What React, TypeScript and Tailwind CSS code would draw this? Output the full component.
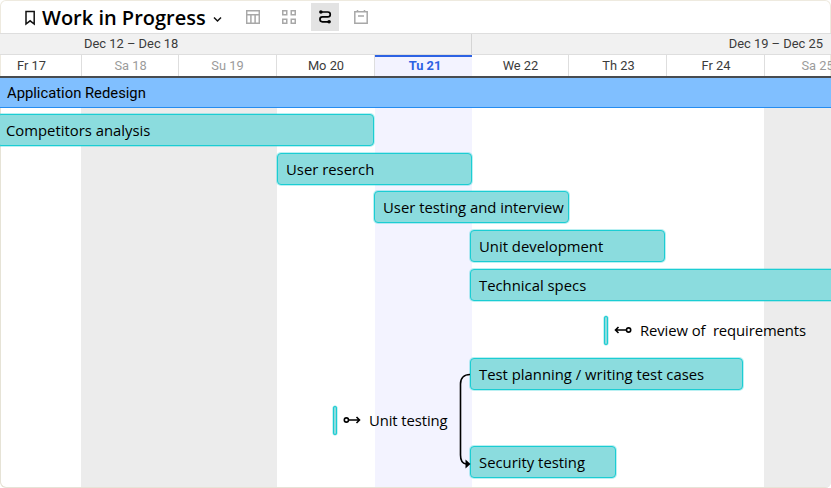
import React from "react";

type Day = { label: string; cell: string };

const days: Day[] = [
  { label: "Fr 17", cell: "w-[82px] pr-[18px] text-[#3b3b3b] border-r border-[#dedede]" },
  { label: "Sa 18", cell: "w-[97px] pl-px text-[#9b9b9b] border-r border-[#dedede]" },
  { label: "Su 19", cell: "w-[98px] text-[#9b9b9b] border-r border-[#dedede]" },
  { label: "Mo 20", cell: "w-[98px] pl-px text-[#3b3b3b] border-r border-[#dedede]" },
  { label: "Tu 21", cell: "w-[97px] pl-[3px] text-[#2d62e3] font-bold bg-[#f3f3ff] shadow-[inset_0_2px_0_#2d62e3]" },
  { label: "We 22", cell: "w-[97px] pl-px text-[#3b3b3b] border-r border-[#dedede]" },
  { label: "Th 23", cell: "w-[98px] pl-[2px] text-[#3b3b3b] border-r border-[#dedede]" },
  { label: "Fr 24", cell: "w-[98px] pl-px text-[#3b3b3b] border-r border-[#dedede]" },
  { label: "Sa 25", cell: "w-[104px] pl-px text-[#9b9b9b]" },
];

const columns = [
  "w-[81px]",
  "w-[196px] bg-[#ececec]",
  "w-[98px]",
  "w-[97px] bg-[#f3f3ff]",
  "w-[292px]",
  "w-[67px] bg-[#ececec]",
];

const bars = [
  { label: "Competitors analysis", place: "mt-[6px] ml-[-3px] h-[32px] w-[377px]" },
  { label: "User reserch", place: "mt-[7px] ml-[277px] h-[32px] w-[195px]" },
  { label: "User testing and interview", place: "mt-[6px] ml-[374px] h-[32px] w-[195px]" },
  { label: "Unit development", place: "mt-[7px] ml-[470px] h-[32px] w-[195px]" },
  { label: "Technical specs", place: "mt-[7px] ml-[470px] h-[32px] w-[370px]" },
];

function Bar({ label, place }: { label: string; place: string }) {
  return (
    <div
      className={`flex shrink-0 items-center rounded-[4px] border border-[#1bcdd3] bg-[#8bdcde] pl-[8px] whitespace-pre shadow-[0_0_0_1px_rgba(27,205,211,0.3)] ${place}`}
    >
      {label}
    </div>
  );
}

function Marker() {
  return (
    <div className="h-[29px] w-[4px] shrink-0 rounded-[2px] border border-[#1bcdd3] bg-[#8bdcde] shadow-[0_0_0_0.5px_rgba(27,205,211,0.5)]" />
  );
}

function PinArrow({ flip = false }: { flip?: boolean }) {
  return (
    <svg
      className={flip ? "shrink-0 -scale-x-100" : "shrink-0"}
      width="18"
      height="10"
      viewBox="0 0 18 10"
      fill="none"
      stroke="#000"
      strokeWidth="1.6"
    >
      <circle cx="3.4" cy="5" r="2.1" />
      <path d="M5.5 5H16.5M13.5 2l3 3-3 3" />
    </svg>
  );
}

function Toolbar() {
  return (
    <header className="flex h-[33px] shrink-0 items-center pl-[25px]">
      <svg className="mt-[2px]" width="11" height="16" viewBox="0 0 11 16" fill="none" stroke="#111" strokeWidth="1.5">
        <path d="M1 1.5H9.2V14L5.1 10.8 1 14Z" />
      </svg>
      <h1 className="mt-[2px] ml-[6px] w-[164px] text-[20px] leading-[28px] font-semibold whitespace-nowrap text-black">
        Work in Progress
      </h1>
      <svg className="mt-[5px] ml-[7px]" width="9" height="7" viewBox="0 0 9 7" fill="none" stroke="#111" strokeWidth="1.5">
        <path d="M1 1.5l3.5 3.5L8 1.5" />
      </svg>
      <svg className="ml-[24px]" width="14" height="14" viewBox="0 0 14 14" fill="none" stroke="#a8a8a8" strokeWidth="1.5">
        <path d="M.7.7H13.3V13.3H.7ZM.7 4.7H13.3M4.9 4.7V13.3M9.1 4.7V13.3" />
      </svg>
      <svg className="ml-[22px]" width="14" height="14" viewBox="0 0 14 14" fill="none" stroke="#a8a8a8" strokeWidth="1.5">
        <path d="M.75.75H4.75V4.75H.75ZM9.25.75H13.25V4.75H9.25ZM.75 9.25H4.75V13.25H.75ZM9.25 9.25H13.25V13.25H9.25Z" />
      </svg>
      <div className="ml-[15px] flex h-[28px] w-[28px] items-center justify-center bg-[#e3e3e3]">
        <svg width="14" height="16" viewBox="0 0 14 16" fill="none" stroke="#000" strokeWidth="1.7">
          <path d="M3 3H9.8a2.4 2.4 0 0 1 0 4.9H4.4a2.4 2.4 0 0 0 0 4.9H11" />
          <circle cx="2.9" cy="3" r="1.8" fill="#000" stroke="none" />
          <circle cx="11.1" cy="12.8" r="1.8" fill="#000" stroke="none" />
        </svg>
      </div>
      <svg className="ml-[15px]" width="14" height="14" viewBox="0 0 14 14" fill="none" stroke="#a8a8a8" strokeWidth="1.5">
        <path d="M.8 1.8H13.2V13.2H.8ZM3.5 0V2M10.5 0V2M4 6H10" />
      </svg>
    </header>
  );
}

export default function App() {
  return (
    <main className="flex h-[488px] w-[831px] flex-col overflow-hidden rounded-[6px] bg-white font-['Open_Sans','Noto_Sans',sans-serif] text-[14.85px] text-black shadow-[inset_0_0_0_1px_#eeeadf]">
      <Toolbar />

      <div className="flex h-[22px] shrink-0 border-y border-[#dedede] bg-[#f1f1f1] font-[Roboto,sans-serif] text-[12.9px] leading-[19px] text-[#3b3b3b]">
        <div className="w-[472px] border-r border-[#d5d5d5] pl-[84px]">Dec 12 – Dec 18</div>
        <div className="flex-1 pr-[8px] text-right">Dec 19 – Dec 25</div>
      </div>

      <div className="flex h-[21px] shrink-0 font-[Roboto,sans-serif] text-[12.85px] leading-[21px]">
        {days.map((day) => (
          <div key={day.label} className={`shrink-0 text-center ${day.cell}`}>
            {day.label}
          </div>
        ))}
      </div>

      <div className="flex h-[32px] shrink-0 items-center border-t-2 border-b border-t-[#484c50] border-b-[#258cf0] bg-[#80bfff] pt-px pl-[7px] font-[Roboto,sans-serif] text-[14.8px]">
        Application Redesign
      </div>

      <section className="grid h-[380px] shrink-0 overflow-hidden">
        <div className="col-start-1 row-start-1 flex">
          {columns.map((column, i) => (
            <div key={i} className={`shrink-0 ${column}`} />
          ))}
        </div>

        <div className="relative col-start-1 row-start-1 flex flex-col">
          {bars.map((bar) => (
            <Bar key={bar.label} {...bar} />
          ))}
          <div className="mt-[14px] ml-[604px] flex h-[30px] shrink-0 items-center">
            <Marker />
            <div className="ml-[6px] flex">
              <PinArrow flip />
            </div>
            <span className="ml-[8px] tracking-[-0.1px] whitespace-pre">Review of  requirements</span>
          </div>
          <Bar label="Test planning / writing test cases" place="mt-[13px] ml-[470px] h-[32px] w-[273px]" />
          <div className="mt-[15px] ml-[333px] flex h-[30px] shrink-0 items-center">
            <Marker />
            <div className="ml-[6px] flex">
              <PinArrow />
            </div>
            <span className="ml-[8px] tracking-[-0.1px]">Unit testing</span>
          </div>
          <Bar label="Security testing" place="mt-[11px] ml-[470px] h-[32px] w-[146px]" />
          <svg className="absolute top-[258px] left-[458px]" width="14" height="106" viewBox="0 0 14 106" fill="none">
            <path d="M12 8.5C6 8.5 2.5 12 2.5 18V89C2.5 95 5 97.5 8 98" stroke="#000" strokeWidth="1.6" />
            <path d="M7.5 93.5L12.5 98 7.5 102.5Z" fill="#000" />
          </svg>
        </div>
        <div className="col-start-1 row-start-1 rounded-b-[6px] border-b border-l border-[#e6e3d6]" />
      </section>
    </main>
  );
}
